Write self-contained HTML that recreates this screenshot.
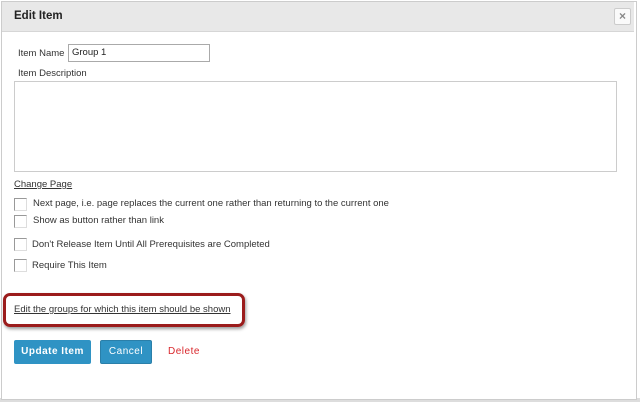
<!DOCTYPE html>
<html><head><style>
body{margin:0;width:640px;height:402px;background:#fff;font-family:"Liberation Sans",sans-serif;font-size:9.5px;color:#333;position:relative;overflow:hidden}
.a{position:absolute}
.dlg{left:1px;top:1px;width:634px;height:397px;border:1px solid #ccc;background:#fff}
.hdr{left:2px;top:2px;width:632px;height:29px;background:#e8e8e8;border-bottom:1px solid #d6d6d6}
.cb{width:11px;height:11px;border:1px solid #999;border-right-color:#ddd;border-bottom-color:#ddd;background:#fff}
.btn{background:#2f93c4;color:#fff;border-radius:2px;text-align:center;line-height:24px;font-weight:bold;font-size:10px;letter-spacing:0.5px}
</style></head><body>
<div class="a" style="left:0;top:398px;width:640px;height:4px;background:#ddd"></div>
<div class="a dlg"></div>
<div class="a hdr"></div>
<div class="a" style="left:14px;top:10px;font-weight:bold;font-size:11.5px;color:#222">Edit Item</div>
<div class="a" style="left:614px;top:8px;width:15px;height:15px;background:#fafafa;border:1px solid #ccc;border-radius:2px;text-align:center;line-height:15px;font-size:12px;font-weight:bold;color:#888">×</div>
<div class="a" style="left:18px;top:48px">Item Name</div>
<div class="a" style="left:68px;top:44px;width:137px;height:16px;border:1px solid #aaa;line-height:16px;padding-left:3px;color:#222">Group 1</div>
<div class="a" style="left:18px;top:68px">Item Description</div>
<div class="a" style="left:14px;top:81px;width:601px;height:89px;border:1px solid #ccc"></div>
<div class="a" style="left:14px;top:179px;text-decoration:underline;color:#333">Change Page</div>
<div class="a cb" style="left:14px;top:198px"></div><div class="a" style="left:33px;top:198px">Next page, i.e. page replaces the current one rather than returning to the current one</div>
<div class="a cb" style="left:14px;top:215px"></div><div class="a" style="left:33px;top:215px">Show as button rather than link</div>
<div class="a cb" style="left:14px;top:238px"></div><div class="a" style="left:32px;top:239px">Don't Release Item Until All Prerequisites are Completed</div>
<div class="a cb" style="left:14px;top:259px"></div><div class="a" style="left:32px;top:260px">Require This Item</div>
<div class="a" style="left:3px;top:293px;width:236px;height:28px;border:3px solid #9b1c1c;border-radius:7px;box-shadow:1px 2px 3px rgba(0,0,0,.4)"></div>
<div class="a" style="left:14px;top:304px;text-decoration:underline;font-size:9.5px">Edit the groups for which this item should be shown</div>
<div class="a btn" style="left:14px;top:340px;width:77px">Update Item</div>
<div class="a btn" style="left:100px;top:340px;width:50px;font-weight:normal;border:1px solid #2a7fa9;line-height:22px">Cancel</div>
<div class="a" style="left:168px;top:346px;color:#d9262b;letter-spacing:0.5px;font-size:10px">Delete</div>
</body></html>
